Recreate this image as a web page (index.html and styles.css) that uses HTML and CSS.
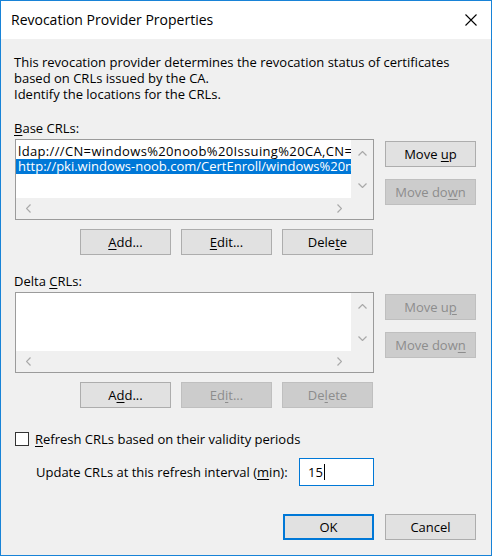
FILE: index.html
```html
<!DOCTYPE html>
<html lang="en">
<head>
<meta charset="utf-8">
<title>Revocation Provider Properties</title>
<link rel="stylesheet" href="styles.css">
</head>
<body>
<div class="window">
  <div class="titlebar">
    <span class="title">Revocation Provider Properties</span>
    <svg class="close" width="12" height="12" viewBox="0 0 12 12"><path d="M0.5 0.5 L11.5 11.5 M11.5 0.5 L0.5 11.5" stroke="#000" stroke-width="1.1" fill="none"/></svg>
  </div>
  <div class="content">
    <p class="intro">This revocation provider determines the revocation status of certificates<br>based on CRLs issued by the CA.<br>Identify the locations for the CRLs.</p>

    <div class="section-label"><u>B</u>ase CRLs:</div>
    <div class="list-row">
      <div class="listbox">
        <div class="list-items">
          <div class="item item-ldap">ldap:///CN=windows%20noob%20Issuing%20CA,CN=</div>
          <div class="item selected">http://pki.windows-noob.com/CertEnroll/windows%20n</div>
        </div>
        <div class="vscroll">
          <span class="arrow"><svg width="9" height="5" viewBox="0 0 9 5"><polyline points="0.5,4.5 4.5,0.5 8.5,4.5" class="chev"/></svg></span>
          <span class="arrow"><svg width="9" height="5" viewBox="0 0 9 5"><polyline points="0.5,0.5 4.5,4.5 8.5,0.5" class="chev"/></svg></span>
        </div>
        <div class="hscroll">
          <span class="arrow-h"><svg width="5" height="9" viewBox="0 0 5 9"><polyline points="4.5,0.5 0.5,4.5 4.5,8.5" class="chev"/></svg></span>
          <span class="arrow-h"><svg width="5" height="9" viewBox="0 0 5 9"><polyline points="0.5,0.5 4.5,4.5 0.5,8.5" class="chev"/></svg></span>
        </div>
        <div class="corner"></div>
      </div>
      <div class="side-buttons">
        <button class="btn">Move <u>u</u>p</button>
        <button class="btn disabled">Move do<u>w</u>n</button>
      </div>
    </div>
    <div class="action-row">
      <button class="btn"><u>A</u>dd...</button>
      <button class="btn"><u>E</u>dit...</button>
      <button class="btn">Dele<u>t</u>e</button>
    </div>

    <div class="section-label"><span>Delta <u>C</u>RLs:</span></div>
    <div class="list-row">
      <div class="listbox">
        <div class="list-items"></div>
        <div class="vscroll">
          <span class="arrow"><svg width="9" height="5" viewBox="0 0 9 5"><polyline points="0.5,4.5 4.5,0.5 8.5,4.5" class="chev"/></svg></span>
          <span class="arrow"><svg width="9" height="5" viewBox="0 0 9 5"><polyline points="0.5,0.5 4.5,4.5 8.5,0.5" class="chev"/></svg></span>
        </div>
        <div class="hscroll">
          <span class="arrow-h"><svg width="5" height="9" viewBox="0 0 5 9"><polyline points="4.5,0.5 0.5,4.5 4.5,8.5" class="chev"/></svg></span>
          <span class="arrow-h"><svg width="5" height="9" viewBox="0 0 5 9"><polyline points="0.5,0.5 4.5,4.5 0.5,8.5" class="chev"/></svg></span>
        </div>
        <div class="corner"></div>
      </div>
      <div class="side-buttons">
        <button class="btn disabled">Move u<u>p</u></button>
        <button class="btn disabled">Move dow<u>n</u></button>
      </div>
    </div>
    <div class="action-row">
      <button class="btn">A<u>d</u>d...</button>
      <button class="btn disabled">Ed<u>i</u>t...</button>
      <button class="btn disabled">De<u>l</u>ete</button>
    </div>

    <div class="check-row">
      <span class="checkbox"></span>
      <span><u>R</u>efresh CRLs based on their validity periods</span>
    </div>
    <div class="update-row">
      <span class="update-label">Update CRLs at this refresh interval (<u>m</u>in):</span>
      <div class="textbox">15<span class="caret"></span></div>
    </div>

    <div class="footer">
      <button class="btn default">OK</button>
      <button class="btn">Cancel</button>
    </div>
  </div>
</div>
</body>
</html>
```

FILE: styles.css
```css
html, body {
  margin: 0;
  padding: 0;
}

body {
  width: 492px;
  height: 556px;
  overflow: hidden;
  background: #f0f0f0;
  font-family: "Open Sans", "Noto Sans", sans-serif;
  font-size: 13px;
  color: #000;
}

u {
  text-decoration: underline;
  text-decoration-thickness: 1px;
  text-underline-offset: 2px;
}

.window {
  box-sizing: border-box;
  width: 492px;
  height: 556px;
  border: 1px solid #1883d7;
  background: #f0f0f0;
  display: flex;
  flex-direction: column;
}

.titlebar {
  height: 38px;
  flex: 0 0 38px;
  background: #fff;
  display: flex;
  align-items: center;
  justify-content: space-between;
  padding: 0 14px 0 10px;
}

.title {
  font-size: 14px;
  line-height: 18px;
}

.close {
  display: block;
}

.content {
  flex: 1;
  display: flex;
  flex-direction: column;
  padding: 15px 0 0 13px;
}

.intro {
  margin: 0;
  line-height: 16px;
}

.section-label {
  margin-top: 18px;
  line-height: 16px;
}

.list-row {
  display: flex;
  gap: 11px;
  margin-top: 3px;
  padding-left: 1px;
}

.listbox {
  box-sizing: border-box;
  width: 359px;
  height: 81px;
  border: 1px solid #9b9b9b;
  background: #f0f0f0;
  display: grid;
  grid-template-columns: 335px 22px;
  grid-template-rows: 58px 21px;
}

.list-items {
  background: #fff;
  padding-top: 4px;
  overflow: hidden;
  min-width: 0;
}

.item {
  line-height: 15px;
  height: 15px;
  padding-left: 2px;
  white-space: nowrap;
  overflow: hidden;
}

.item-ldap {
  letter-spacing: 0.35px;
}

.item.selected {
  background: #0078d7;
  color: #fff;
}

.vscroll {
  display: flex;
  flex-direction: column;
  justify-content: space-between;
}

.arrow {
  height: 26px;
  display: flex;
  align-items: center;
  justify-content: center;
}

.hscroll {
  display: flex;
  justify-content: space-between;
}

.arrow-h {
  width: 24px;
  display: flex;
  align-items: center;
  justify-content: center;
}

.arrow svg, .arrow-h svg {
  display: block;
}

.chev {
  fill: none;
  stroke: #a9a9a9;
  stroke-width: 1.2;
}

.corner {
  background: #f0f0f0;
}

.side-buttons {
  display: flex;
  flex-direction: column;
  gap: 12px;
  padding-top: 2px;
}

.btn {
  box-sizing: border-box;
  width: 91px;
  height: 26px;
  margin: 0;
  padding: 0;
  border: 1px solid #adadad;
  background: #e1e1e1;
  color: #000;
  font-family: inherit;
  font-size: 13px;
  line-height: 16px;
  text-align: center;
}

.btn.disabled {
  background: #cccccc;
  border-color: #bfbfbf;
  color: #8d8d8d;
}

.btn.default {
  border: 2px solid #0078d7;
}

.action-row {
  display: flex;
  justify-content: flex-end;
  gap: 10px;
  width: 359px;
  margin-top: 9px;
}

.check-row {
  display: flex;
  align-items: center;
  gap: 6px;
  margin-top: 23px;
  padding-left: 1px;
  line-height: 16px;
}

.checkbox {
  box-sizing: border-box;
  width: 14px;
  height: 14px;
  border: 1px solid #333;
  background: #fff;
}

.update-row {
  display: flex;
  align-items: center;
  gap: 10px;
  margin-top: 11px;
  padding-left: 22px;
}

.update-label {
  width: 253px;
  white-space: nowrap;
  line-height: 16px;
}

.textbox {
  box-sizing: border-box;
  width: 75px;
  height: 28px;
  border: 1px solid #0078d7;
  background: #fff;
  padding-left: 8px;
  display: flex;
  align-items: center;
  line-height: 16px;
}

.caret {
  display: inline-block;
  width: 1px;
  height: 16px;
  background: #000;
  margin-left: 1px;
}

.footer {
  display: flex;
  justify-content: flex-end;
  gap: 11px;
  margin-top: 28px;
  padding-right: 15px;
}
```
